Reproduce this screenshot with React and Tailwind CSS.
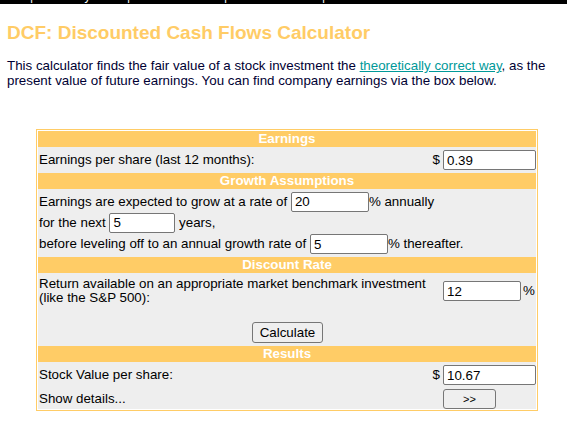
import React, { useState } from 'react';

const Field = ({ value, onChange, className = 'w-[93px]' }) => (
  <input
    value={value}
    onChange={(e) => onChange(e.target.value)}
    className={`${className} h-[20px] border border-[#767676] rounded-[2px] bg-white px-[3px] text-[13.33px] text-black outline-none`}
  />
);

const Header = ({ children }) => (
  <div className="h-[16px] bg-[#FFCC66] text-center text-[13.33px] font-bold leading-[16px] text-white">{children}</div>
);

const App = () => {
  const [eps, setEps] = useState('0.39');
  const [growth, setGrowth] = useState('20');
  const [years, setYears] = useState('5');
  const [terminal, setTerminal] = useState('5');
  const [discount, setDiscount] = useState('12');
  const [value, setValue] = useState('10.67');

  const calculate = () => {
    const e = parseFloat(eps);
    const g = parseFloat(growth) / 100;
    const n = parseInt(years, 10);
    const t = parseFloat(terminal) / 100;
    const r = parseFloat(discount) / 100;
    let total = 0;
    let cur = e;
    for (let i = 1; i <= n; i++) {
      cur = cur * (1 + g);
      total += cur / Math.pow(1 + r, i);
    }
    const tv = (cur * (1 + t)) / (r - t);
    total += tv / Math.pow(1 + r, n);
    setValue(total.toFixed(2));
  };

  return (
    <div className="min-h-[430px] bg-white font-['Liberation_Sans',Arial,sans-serif] text-[13.33px] text-[#000033]">
      <div className="h-[4px] overflow-hidden bg-black">
        <div className="-mt-[11px] flex whitespace-nowrap text-[12px] leading-[14px] text-white">
          <span className="w-[30px]"></span>
          <span className="w-[97px]">| &nbsp; Glossary</span>
          <span className="w-[97px]">| &nbsp; Search</span>
          <span className="w-[98px]">| &nbsp; Books</span>
          <span>|</span>
        </div>
      </div>

      <h1 className="mt-[18px] ml-[7px] text-[19px] font-bold leading-[22px] text-[#FFCC66]">
        DCF: Discounted Cash Flows Calculator
      </h1>

      <p className="mt-[14px] ml-[7px] mr-[18px] leading-[15px]">
        This calculator finds the fair value of a stock investment the{' '}
        <a href="#" className="text-[#009999] underline">theoretically correct way</a>, as the present value of
        future earnings. You can find company earnings via the box below.
      </p>

      <div className="mt-[41px] ml-[36px] w-[502px] border border-[#FFCC66] p-[1px] text-black">
        <Header>Earnings</Header>
        <div className="flex h-[26px] items-center justify-between bg-[#EEEEEE] pl-[1px] pr-0">
          <span>Earnings per share (last 12 months):</span>
          <span className="flex items-center gap-[3px]">
            $ <Field value={eps} onChange={setEps} />
          </span>
        </div>

        <Header>Growth Assumptions</Header>
        <div className="bg-[#EEEEEE] pl-[1px] pt-[2px] pb-[2px]">
          <div className="flex h-[21px] items-center">
            Earnings are expected to grow at a rate of&nbsp;
            <Field value={growth} onChange={setGrowth} className="w-[78px]" />
            % annually
          </div>
          <div className="flex h-[21px] items-center">
            for the next&nbsp;
            <Field value={years} onChange={setYears} className="w-[66px]" />
            &nbsp;years,
          </div>
          <div className="flex h-[22px] items-center">
            before leveling off to an annual growth rate of&nbsp;
            <Field value={terminal} onChange={setTerminal} className="w-[78px]" />
            % thereafter.
          </div>
        </div>

        <Header>Discount Rate</Header>
        <div className="bg-[#EEEEEE] pl-[1px]">
          <div className="flex items-center justify-between pt-[4px]">
            <span className="w-[400px] leading-[14px]">
              Return available on an appropriate market benchmark investment (like the S&amp;P 500):
            </span>
            <span className="flex items-center">
              <Field value={discount} onChange={setDiscount} className="w-[78px]" />
              <span className="w-[15px] pl-[2px]">%</span>
            </span>
          </div>
          <div className="flex justify-center pt-[17px] pb-[3px]">
            <button
              onClick={calculate}
              className="h-[21px] rounded-[3px] border border-[#767676] bg-[#EFEFEF] px-[7px] text-[13.33px] leading-[19px] text-black"
            >
              Calculate
            </button>
          </div>
        </div>

        <Header>Results</Header>
        <div className="bg-[#EEEEEE] pl-[1px]">
          <div className="flex h-[26px] items-center justify-between">
            <span>Stock Value per share:</span>
            <span className="flex items-center gap-[3px]">
              $ <Field value={value} onChange={setValue} />
            </span>
          </div>
          <div className="flex h-[21px] items-center justify-between">
            <span>Show details...</span>
            <span className="w-[93px]">
              <button className="h-[20px] w-[53px] rounded-[3px] border border-[#767676] bg-[#EFEFEF] text-[11px] leading-[18px] text-black">
                &gt;&gt;
              </button>
            </span>
          </div>
        </div>
      </div>
    </div>
  );
};

export default App;
